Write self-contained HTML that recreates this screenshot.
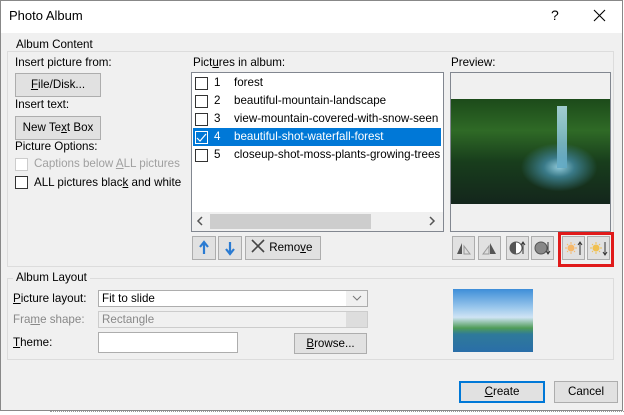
<!DOCTYPE html>
<html><head><meta charset="utf-8"><style>
*{margin:0;padding:0;box-sizing:border-box}
body{width:624px;height:415px;background:#fff;font-family:"Liberation Sans",sans-serif;font-size:11.6px;color:#000;position:relative;overflow:hidden}
.a{position:absolute;white-space:nowrap}
.btn{position:absolute;background:#e1e1e1;border:1px solid #adadad;text-align:center}
.cb{position:absolute;width:13px;height:13px;border:1px solid #333;background:#fff}
.grp{position:absolute;border:1px solid #dcdcdc}
u{text-decoration:underline}
</style></head><body>
<div class="a" style="left:0;top:0;width:623px;height:411px;background:#f0f0f0;border:1px solid #888"></div>
<div class="a" style="left:1px;top:1px;width:621px;height:32px;background:#fff"></div>
<div class="a" style="left:9px;top:8px;font-size:13px">Photo Album</div>
<div class="a" style="left:551px;top:7px;font-size:14px">?</div>
<svg class="a" style="left:593px;top:9px" width="13" height="13"><path d="M1 1L12 12M12 1L1 12" stroke="#000" stroke-width="1.1"/></svg>
<div class="a" style="left:50px;top:411px;width:574px;border-top:1px dotted #999"></div>

<div class="grp" style="left:7px;top:51px;width:607px;height:216px"></div>
<div class="a" style="left:13px;top:38px;background:#f0f0f0;padding:0 3px">Album Content</div>
<div class="a" style="left:15px;top:56px">Insert picture from:</div>
<div class="btn" style="left:15px;top:73px;width:86px;height:24px;line-height:22px"><u>F</u>ile/Disk...</div>
<div class="a" style="left:15px;top:98px">Insert text:</div>
<div class="btn" style="left:15px;top:116px;width:86px;height:24px;line-height:22px">New Te<u>x</u>t Box</div>
<div class="a" style="left:15px;top:140px">Picture Options:</div>
<div class="cb" style="left:15px;top:158px;border-color:#ccc"></div>
<div class="a" style="left:34px;top:157px;color:#a0a0a0">Captions below <u>A</u>LL pictures</div>
<div class="cb" style="left:15px;top:176px"></div>
<div class="a" style="left:34px;top:176px">ALL pictures blac<u>k</u> and white</div>

<div class="a" style="left:193px;top:56px">Pict<u>u</u>res in album:</div>
<div class="a" style="left:191px;top:72px;width:253px;height:160px;background:#fff;border:1px solid #828790"></div>
<div class="a" style="left:193px;top:128px;width:248px;height:18px;background:#0078d7"></div>
<div class="cb" style="left:195px;top:77px"></div><div class="a" style="left:214px;top:76px">1</div><div class="a" style="left:234px;top:76px">forest</div>
<div class="cb" style="left:195px;top:95px"></div><div class="a" style="left:214px;top:94px">2</div><div class="a" style="left:234px;top:94px">beautiful-mountain-landscape</div>
<div class="cb" style="left:195px;top:113px"></div><div class="a" style="left:214px;top:112px">3</div><div class="a" style="left:234px;top:112px;width:206px;overflow:hidden">view-mountain-covered-with-snow-seen</div>
<div class="cb" style="left:195px;top:131px;background:#0078d7;border-color:#fff"></div>
<svg class="a" style="left:196px;top:132px" width="11" height="11"><path d="M1 6L4 9L10 2" stroke="#fff" fill="none" stroke-width="1.2"/></svg>
<div class="a" style="left:214px;top:130px;color:#fff">4</div><div class="a" style="left:234px;top:130px;color:#fff">beautiful-shot-waterfall-forest</div>
<div class="cb" style="left:195px;top:149px"></div><div class="a" style="left:214px;top:148px">5</div><div class="a" style="left:234px;top:148px;width:206px;overflow:hidden">closeup-shot-moss-plants-growing-trees</div>
<div class="a" style="left:192px;top:212px;width:251px;height:19px;background:#f0f0f0"></div>
<div class="a" style="left:210px;top:214px;width:161px;height:15px;background:#cdcdcd"></div>
<svg class="a" style="left:196px;top:216px" width="8" height="10"><path d="M6 1L2 5L6 9" stroke="#555" fill="none" stroke-width="1.5"/></svg>
<svg class="a" style="left:428px;top:216px" width="8" height="10"><path d="M2 1L6 5L2 9" stroke="#555" fill="none" stroke-width="1.5"/></svg>

<div class="btn" style="left:192px;top:236px;width:24px;height:24px"><svg width="22" height="22"><path d="M11 17V6M7 10L11 5L15 10" stroke="#2a7bd2" stroke-width="2.2" fill="none"/></svg></div>
<div class="btn" style="left:218px;top:236px;width:24px;height:24px"><svg width="22" height="22"><path d="M11 5V16M7 12L11 17L15 12" stroke="#2a7bd2" stroke-width="2.2" fill="none"/></svg></div>
<div class="btn" style="left:245px;top:236px;width:76px;height:24px;line-height:22px;text-align:left;padding-left:4px"><svg width="16" height="14" style="vertical-align:-2px"><path d="M2 1L14 13M14 1L2 13" stroke="#444" stroke-width="1.6"/></svg> Remo<u>v</u>e</div>

<div class="a" style="left:451px;top:56px">Preview:</div>
<div class="a" style="left:450px;top:72px;width:161px;height:160px;background:#f0f0f0;border:1px solid #828790"></div>
<div class="a" style="left:451px;top:99px;width:159px;height:105px;background:radial-gradient(ellipse at 68% 65%,#8fc8d8 0,#3a7a88 10%,transparent 25%),linear-gradient(180deg,#1c4a1a 0,#2f6a26 30%,#183d1c 60%,#14261c 100%)"></div>
<div class="a" style="left:557px;top:106px;width:10px;height:62px;background:linear-gradient(#b8e2ee,#5fa8c4);opacity:.85"></div>

<div class="btn" style="left:452px;top:236px;width:23px;height:24px"><svg width="21" height="22"><path d="M4 17L9 6V17Z" fill="#555"/><path d="M11 17L11 9L17 17Z" fill="#ddd" stroke="#999"/></svg></div>
<div class="btn" style="left:478px;top:236px;width:23px;height:24px"><svg width="21" height="22"><path d="M4 17L10 9V17Z" fill="#ddd" stroke="#999"/><path d="M11 17L11 6L17 17Z" fill="#555"/></svg></div>
<div class="btn" style="left:506px;top:236px;width:23px;height:24px"><svg width="21" height="22"><circle cx="9" cy="11" r="6" fill="#fff" stroke="#555"/><path d="M9 5A6 6 0 0 0 9 17Z" fill="#555"/><path d="M16 17V5M14 8L16 5L18 8" stroke="#333" fill="none"/></svg></div>
<div class="btn" style="left:531px;top:236px;width:23px;height:24px"><svg width="21" height="22"><circle cx="9" cy="11" r="6" fill="#888" stroke="#555"/><path d="M16 5V17M14 14L16 17L18 14" stroke="#333" fill="none"/></svg></div>
<div class="a" style="left:558px;top:232px;width:56px;height:35px;border:3px solid #e01a1a"></div>
<div class="btn" style="left:562px;top:236px;width:23px;height:24px"><svg width="21" height="22"><circle cx="8" cy="11" r="3.5" fill="#f5b86a"/><path d="M8 5V7M8 15V17M2 11H4M12 11H14M4 7L5 8M12 7L11 8M4 15L5 14M12 15L11 14" stroke="#f5b86a"/><path d="M17 18V5M15 8L17 5L19 8" stroke="#333" fill="none"/></svg></div>
<div class="btn" style="left:587px;top:236px;width:23px;height:24px"><svg width="21" height="22"><circle cx="8" cy="11" r="3.5" fill="#f0c050"/><path d="M8 5V7M8 15V17M2 11H4M12 11H14M4 7L5 8M12 7L11 8M4 15L5 14M12 15L11 14" stroke="#f0c050"/><path d="M17 5V18M15 15L17 18L19 15" stroke="#333" fill="none"/></svg></div>

<div class="grp" style="left:7px;top:278px;width:607px;height:82px"></div>
<div class="a" style="left:13px;top:271px;background:#f0f0f0;padding:0 3px">Album Layout</div>
<div class="a" style="left:13px;top:292px"><u>P</u>icture layout:</div>
<div class="a" style="left:98px;top:290px;width:270px;height:17px;background:#fff;border:1px solid #adadad;padding-left:3px;line-height:15px">Fit to slide</div>
<div class="a" style="left:346px;top:291px;width:21px;height:15px;background:#f0f0f0"></div>
<svg class="a" style="left:352px;top:295px" width="10" height="7"><path d="M1 1L5 5L9 1" stroke="#777" fill="none"/></svg>
<div class="a" style="left:13px;top:313px;color:#888">Fra<u>m</u>e shape:</div>
<div class="a" style="left:98px;top:311px;width:270px;height:17px;background:#f0f0f0;border:1px solid #ccc;padding-left:3px;line-height:15px;color:#888">Rectangle</div>
<div class="a" style="left:346px;top:312px;width:21px;height:15px;background:#ddd"></div>
<div class="a" style="left:13px;top:336px"><u>T</u>heme:</div>
<div class="a" style="left:98px;top:332px;width:140px;height:21px;background:#fff;border:1px solid #adadad"></div>
<div class="btn" style="left:294px;top:333px;width:73px;height:21px;line-height:19px"><u>B</u>rowse...</div>
<div class="a" style="left:453px;top:289px;width:80px;height:63px;background:linear-gradient(180deg,#3d8ed8 0,#9cc8ec 30%,#cfe4f4 45%,#4f9c58 62%,#2f7a9a 72%,#2a6ea8 100%)"></div>

<div class="btn" style="left:459px;top:381px;width:86px;height:22px;border:2px solid #0078d7;line-height:18px"><u>C</u>reate</div>
<div class="btn" style="left:554px;top:381px;width:64px;height:22px;line-height:20px">Cancel</div>
</body></html>
